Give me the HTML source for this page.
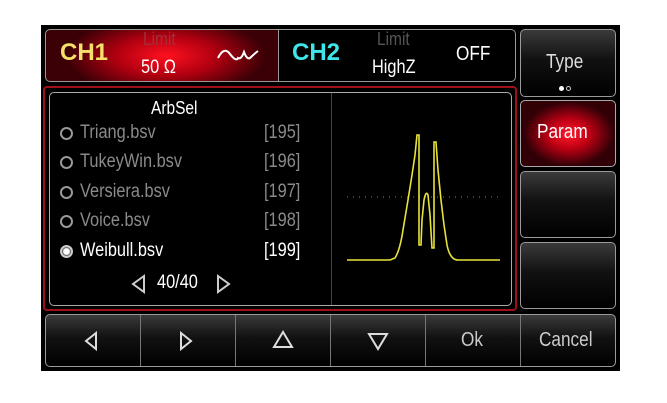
<!DOCTYPE html>
<html><head><style>
body{margin:0;width:667px;height:403px;background:#fff;position:relative;overflow:hidden;font-family:"Liberation Sans",sans-serif}
.a{position:absolute}
.scr{left:41px;top:25px;width:579px;height:346px;background:#000}
.btn{border:1px solid #9a9a9a;border-radius:5px;box-sizing:border-box;background:linear-gradient(#3a3a3a,#111 45%,#000);}
.t{position:absolute;white-space:nowrap;transform:scaleX(.86);transform-origin:left top}
.g{color:#8a8a8a}
.rad{position:absolute;width:13px;height:13px;border:2.5px solid #999;border-radius:50%;box-sizing:border-box}
.r{font-size:19px}
</style></head><body>
<div class="a scr"></div>
<!-- CH1 -->
<div class="a" style="left:45px;top:29px;width:234px;height:53px;border:1px solid #999;border-radius:5px 0 0 5px;box-sizing:border-box;background:radial-gradient(ellipse 100px 40px at 120px 26px,#ff1020,#b00010 50%,#3a0006 100%)"></div>
<div class="t" style="left:60px;top:39px;font-size:24px;font-weight:bold;color:#f4e06a;transform:none">CH1</div>
<div class="t" style="left:143px;top:29px;font-size:18px;color:#a0303a">Limit</div>
<div class="t" style="left:141px;top:57px;font-size:19px;color:#fff">50 Ω</div>
<svg class="a" style="left:216px;top:44px" width="48" height="20"><path d="M2 14 Q8 2 14 10 T22 14 Q25 16 28 8 Q31 16 34 14 Q38 10 42 7" fill="none" stroke="#fff" stroke-width="2"/></svg>
<!-- CH2 -->
<div class="a" style="left:279px;top:29px;width:237px;height:53px;border:1px solid #999;border-left:none;border-radius:0 5px 5px 0;box-sizing:border-box;background:#000"></div>
<div class="t" style="left:292px;top:39px;font-size:24px;font-weight:bold;color:#3ee6ea;transform:none">CH2</div>
<div class="t" style="left:377px;top:29px;font-size:18px;color:#555">Limit</div>
<div class="t" style="left:372px;top:57px;font-size:19px;color:#fff">HighZ</div>
<div class="t" style="left:456px;top:43px;font-size:20px;color:#fff">OFF</div>
<!-- right buttons -->
<div class="a btn" style="left:520px;top:29px;width:96px;height:68px"></div>
<div class="t" style="left:546px;top:51px;font-size:20px;color:#ddd">Type</div>
<div class="a" style="left:559px;top:86px;width:5px;height:5px;border-radius:50%;background:#fff"></div>
<div class="a" style="left:566px;top:86px;width:5px;height:5px;border-radius:50%;border:1px solid #ccc;box-sizing:border-box"></div>
<div class="a" style="left:520px;top:100px;width:96px;height:67px;border:1px solid #aaa;border-radius:5px;box-sizing:border-box;background:radial-gradient(ellipse 45px 32px at 48px 33px,#ff1a2a,#c00014 45%,#300006 100%)"></div>
<div class="t" style="left:537px;top:121px;font-size:20px;color:#fff">Param</div>
<div class="a btn" style="left:520px;top:171px;width:96px;height:67px"></div>
<div class="a btn" style="left:520px;top:242px;width:96px;height:67px"></div>
<!-- main panel -->
<div class="a" style="left:43px;top:86px;width:474px;height:225px;border:2px solid #a01018;border-radius:4px;box-sizing:border-box"></div>
<div class="a" style="left:49px;top:92px;width:463px;height:214px;border:1px solid #aaa;border-radius:5px;box-sizing:border-box"></div>
<div class="a" style="left:331px;top:93px;width:1px;height:212px;background:#444"></div>
<div class="t r" style="left:151px;top:98px;font-size:18px;color:#fff">ArbSel</div>
<div class="rad" style="left:60px;top:127px"></div><div class="t g r" style="left:80px;top:122px">Triang.bsv</div><div class="t g r" style="left:264px;top:122px">[195]</div>
<div class="rad" style="left:60px;top:156px"></div><div class="t g r" style="left:80px;top:151px">TukeyWin.bsv</div><div class="t g r" style="left:264px;top:151px">[196]</div>
<div class="rad" style="left:60px;top:186px"></div><div class="t g r" style="left:80px;top:181px">Versiera.bsv</div><div class="t g r" style="left:264px;top:181px">[197]</div>
<div class="rad" style="left:60px;top:215px"></div><div class="t g r" style="left:80px;top:210px">Voice.bsv</div><div class="t g r" style="left:264px;top:210px">[198]</div>
<div class="rad" style="left:60px;top:245px;border-color:#ccc;background:radial-gradient(#fff 45%,#666 60%)"></div><div class="t r" style="left:80px;top:240px;color:#fff">Weibull.bsv</div><div class="t r" style="left:264px;top:240px;color:#fff">[199]</div>
<svg class="a" style="left:128px;top:273px" width="105" height="22"><path d="M16 3 L5 11 L16 19 Z" fill="none" stroke="#ccc" stroke-width="2"/><path d="M90 3 L101 11 L90 19 Z" fill="none" stroke="#ccc" stroke-width="2"/></svg>
<div class="t r" style="left:157px;top:272px;color:#fff">40/40</div>
<!-- waveform -->
<svg class="a" style="left:340px;top:120px" width="170" height="150">
<line x1="7" y1="77" x2="160" y2="77" stroke="#777" stroke-dasharray="1 5"/>
<path d="M7 140 L50 140 L55 138 Q60 130 63 110 L68 80 L72 55 L75 35 L77 15 L79 15 L79 125 L81 125 L82 100 L84 80 Q86 70 88 75 L90 95 L92 128 L94 128 L94 22 L96 22 L98 50 L101 80 L104 105 L107 125 Q110 140 118 140 L160 140" fill="none" stroke="#e8e23a" stroke-width="1.6"/>
</svg>
<!-- bottom bar -->
<div class="a btn" style="left:45px;top:314px;width:571px;height:53px"></div>
<div class="a" style="left:140px;top:315px;width:1px;height:51px;background:#777"></div>
<div class="a" style="left:235px;top:315px;width:1px;height:51px;background:#777"></div>
<div class="a" style="left:330px;top:315px;width:1px;height:51px;background:#777"></div>
<div class="a" style="left:425px;top:315px;width:1px;height:51px;background:#777"></div>
<div class="a" style="left:520px;top:315px;width:1px;height:51px;background:#777"></div>
<svg class="a" style="left:45px;top:314px" width="400" height="53">
<path d="M51 19 L41 27 L51 35 Z" fill="none" stroke="#ddd" stroke-width="2"/>
<path d="M136 19 L146 27 L136 35 Z" fill="none" stroke="#ddd" stroke-width="2"/>
<path d="M238 18 L229 33 L247 33 Z" fill="none" stroke="#ddd" stroke-width="2"/>
<path d="M324 20 L342 20 L333 35 Z" fill="none" stroke="#ddd" stroke-width="2"/>
</svg>
<div class="t" style="left:461px;top:329px;font-size:20px;color:#ccc">Ok</div>
<div class="t" style="left:539px;top:329px;font-size:20px;color:#ccc">Cancel</div>
</body></html>
